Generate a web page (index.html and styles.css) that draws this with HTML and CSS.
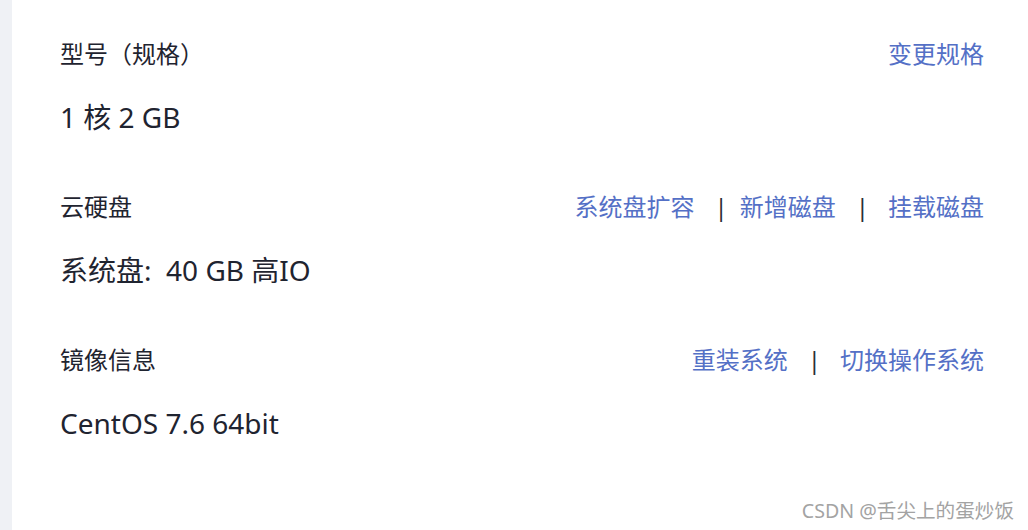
FILE: index.html
```html
<!DOCTYPE html>
<html lang="zh-CN">
<head>
<meta charset="utf-8">
<title>实例配置</title>
<link rel="stylesheet" href="styles.css">
</head>
<body>
<div class="page">
  <div class="strip"></div>
  <main class="card">
    <section class="section">
      <div class="head">
        <span class="label">型号（规格）</span>
        <div class="actions"><a class="link">变更规格</a></div>
      </div>
      <div class="value">1 核 2 GB</div>
    </section>
    <section class="section">
      <div class="head">
        <span class="label">云硬盘</span>
        <div class="actions">
          <a class="link">系统盘扩容</a><span class="sep">|</span><a class="link">新增磁盘</a><span class="sep sep-wide">|</span><a class="link">挂载磁盘</a>
        </div>
      </div>
      <div class="value">系统盘:&nbsp; 40 GB 高IO</div>
    </section>
    <section class="section">
      <div class="head">
        <span class="label">镜像信息</span>
        <div class="actions">
          <a class="link">重装系统</a><span class="sep sep-wide">|</span><a class="link">切换操作系统</a>
        </div>
      </div>
      <div class="value">CentOS 7.6 64bit</div>
    </section>
  </main>
  <div class="watermark">CSDN @舌尖上的蛋炒饭</div>
</div>
</body>
</html>
```

FILE: styles.css
```css
html, body {
  margin: 0;
  padding: 0;
  background: #ffffff;
}
body {
  font-family: "Noto Sans", "Noto Sans CJK SC", sans-serif;
  color: #222733;
}
.page {
  display: flex;
  width: 1028px;
  height: 530px;
  position: relative;
  overflow: hidden;
}
.strip {
  width: 12px;
  flex: none;
  background: #eff1f5;
}
.card {
  flex: 1;
  padding: 38px 44px 0 48px;
  display: flex;
  flex-direction: column;
  gap: 56px;
}
.section {
  display: flex;
  flex-direction: column;
  gap: 29px;
}
.head {
  display: flex;
  justify-content: space-between;
  align-items: center;
  height: 32px;
}
.label {
  font-size: 24px;
  line-height: 32px;
  color: #1f2430;
}
.actions {
  display: flex;
  align-items: center;
}
.link {
  font-size: 24px;
  line-height: 32px;
  color: #5470c6;
  text-decoration: none;
  cursor: pointer;
}
.sep {
  font-size: 24px;
  line-height: 32px;
  color: #2b2f36;
  margin: 0 12px 0 20px;
}
.sep-wide {
  margin: 0 19px 0 20px;
}
.value {
  font-size: 28px;
  line-height: 36px;
  color: #1f2430;
}
.watermark {
  position: absolute;
  right: 14px;
  bottom: 6px;
  font-size: 19.6px;
  line-height: 26px;
  color: #a3a3a3;
}
```
